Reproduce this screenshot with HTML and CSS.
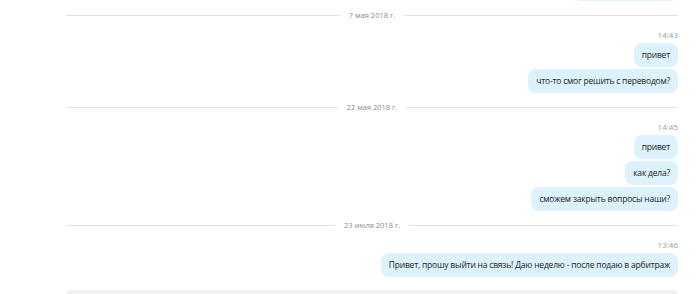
FILE: index.html
```html
<!DOCTYPE html>
<html>

<head>
    <meta charset="utf-8">
    <link rel="stylesheet" href="styles.css">
</head>

<body>
    <div class="chat">
        <div class="messages">
            <div class="bubble first">&nbsp;</div>

            <div class="divider"><span>7 мая 2018 г.</span></div>
            <div class="time">14:43</div>
            <div class="bubble">привет</div>
            <div class="bubble">что-то смог решить с переводом?</div>

            <div class="divider"><span>22 мая 2018 г.</span></div>
            <div class="time">14:45</div>
            <div class="bubble">привет</div>
            <div class="bubble">как дела?</div>
            <div class="bubble">сможем закрыть вопросы наши?</div>

            <div class="divider"><span>23 июля 2018 г.</span></div>
            <div class="time">13:46</div>
            <div class="bubble">Привет, прошу выйти на связь! Даю неделю - после подаю в арбитраж</div>
        </div>
        <div class="inputbox"></div>
    </div>
</body>

</html>
```

FILE: styles.css
```css
html,
body {
    margin: 0;
    background: #ffffff;
    overflow: hidden;
}

.chat {
    font-family: "Open Sans", "Noto Sans", sans-serif;
    padding: 0 22px 0 66px;
    height: 294px;
    display: flex;
    flex-direction: column;
}

.messages {
    display: flex;
    flex-direction: column;
    align-items: flex-end;
    gap: 2px;
}

.bubble {
    background: #dcf3fd;
    color: #222222;
    font-size: 8.5px;
    letter-spacing: -0.2px;
    line-height: 24px;
    height: 24px;
    padding: 0 8px;
    border-radius: 8px;
    white-space: nowrap;
}

.bubble.first {
    width: 90px;
    margin-top: -23px;
}

.divider {
    align-self: stretch;
    display: flex;
    align-items: center;
    gap: 9px;
    height: 14px;
    margin-top: 5px;
    font-size: 7.5px;
    color: #8a8a8a;
}

.divider::before,
.divider::after {
    content: "";
    flex: 1;
    height: 1px;
    background: #e2e2e2;
}

.time {
    font-size: 8px;
    line-height: 12px;
    color: #9a9a9a;
    margin-top: 5px;
}

.inputbox {
    margin-top: 13px;
    height: 30px;
    background: #f1f1f3;
    border-radius: 8px 8px 0 0;
}
```
